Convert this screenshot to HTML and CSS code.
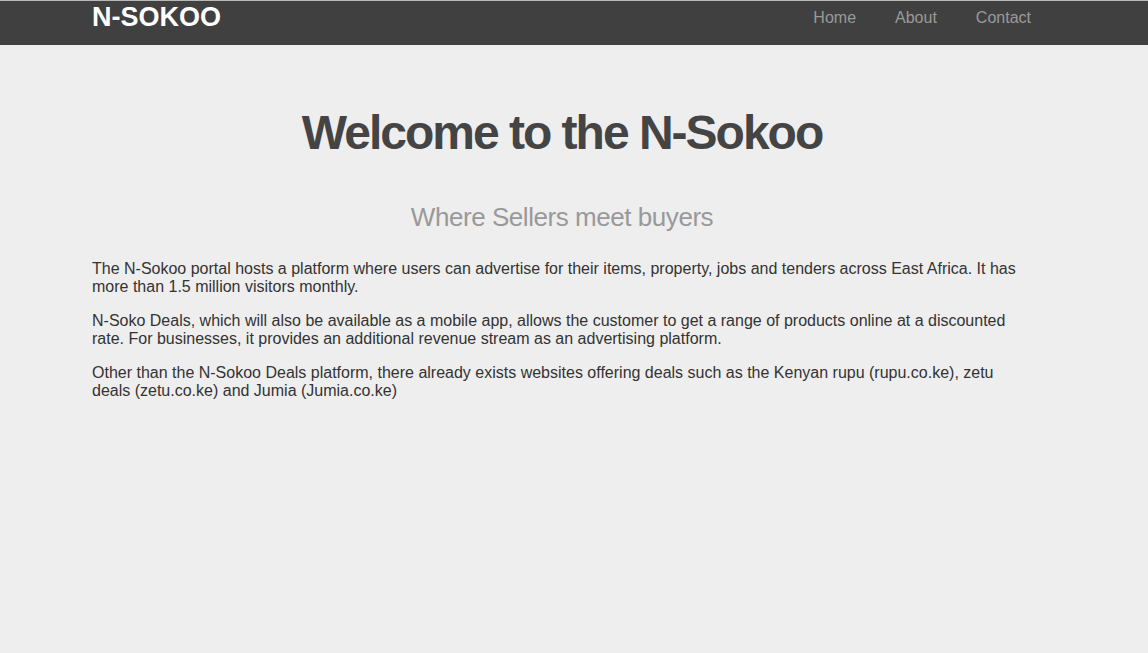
FILE: index.html
```html
<!DOCTYPE html>
<html lang="en">
<head>
<meta charset="utf-8">
<title>N-Sokoo</title>
<link rel="stylesheet" href="styles.css">
</head>
<body>
<header class="topbar">
  <div class="container bar-inner">
    <a class="brand" href="#">N-SOKOO</a>
    <nav class="nav">
      <a href="#">Home</a>
      <a href="#">About</a>
      <a href="#">Contact</a>
    </nav>
  </div>
</header>
<main class="container content">
  <h1 class="title">Welcome to the N-Sokoo</h1>
  <h2 class="subtitle">Where Sellers meet buyers</h2>
  <p>The N-Sokoo portal hosts a platform where users can advertise for their items, property, jobs and tenders across East Africa. It has more than 1.5 million visitors monthly.</p>
  <p>N-Soko Deals, which will also be available as a mobile app, allows the customer to get a range of products online at a discounted rate. For businesses, it provides an additional revenue stream as an advertising platform.</p>
  <p>Other than the N-Sokoo Deals platform, there already exists websites offering deals such as the Kenyan rupu (rupu.co.ke), zetu deals (zetu.co.ke) and Jumia (Jumia.co.ke)</p>
</main>
</body>
</html>
```

FILE: styles.css
```css
html, body {
  margin: 0;
  padding: 0;
}
body {
  background: #eeeeee;
  font-family: "Liberation Sans", Arial, sans-serif;
  color: #333333;
  min-height: 653px;
}
.container {
  width: 940px;
  margin-left: 92px;
}
.topbar {
  background: #404040;
  border-top: 1px solid #b8b8b8;
  height: 44px;
}
.bar-inner {
  display: flex;
  align-items: flex-start;
  justify-content: space-between;
  height: 44px;
}
.brand {
  color: #ffffff;
  font-weight: bold;
  font-size: 27px;
  line-height: 32px;
  text-decoration: none;
}
.nav {
  display: flex;
  padding-top: 7px;
}
.nav a {
  color: #9a9a9a;
  text-decoration: none;
  font-size: 16px;
  line-height: 20px;
  padding: 0 19px 0 20px;
}
.nav a:first-child {
  padding-left: 0;
}
.nav a:last-child {
  padding-right: 1px;
}
.content {
  padding-top: 60px;
}
.title {
  margin: 0;
  text-align: center;
  font-size: 48px;
  line-height: 56px;
  letter-spacing: -2px;
  color: #444444;
  font-weight: bold;
}
.subtitle {
  margin: 41px 0 0;
  text-align: center;
  font-size: 26px;
  line-height: 30px;
  letter-spacing: -0.45px;
  color: #999999;
  font-weight: normal;
}
.content p {
  font-size: 16px;
  line-height: 18px;
  margin: 0 0 16px;
}
.subtitle + p {
  margin-top: 28px;
}
```
